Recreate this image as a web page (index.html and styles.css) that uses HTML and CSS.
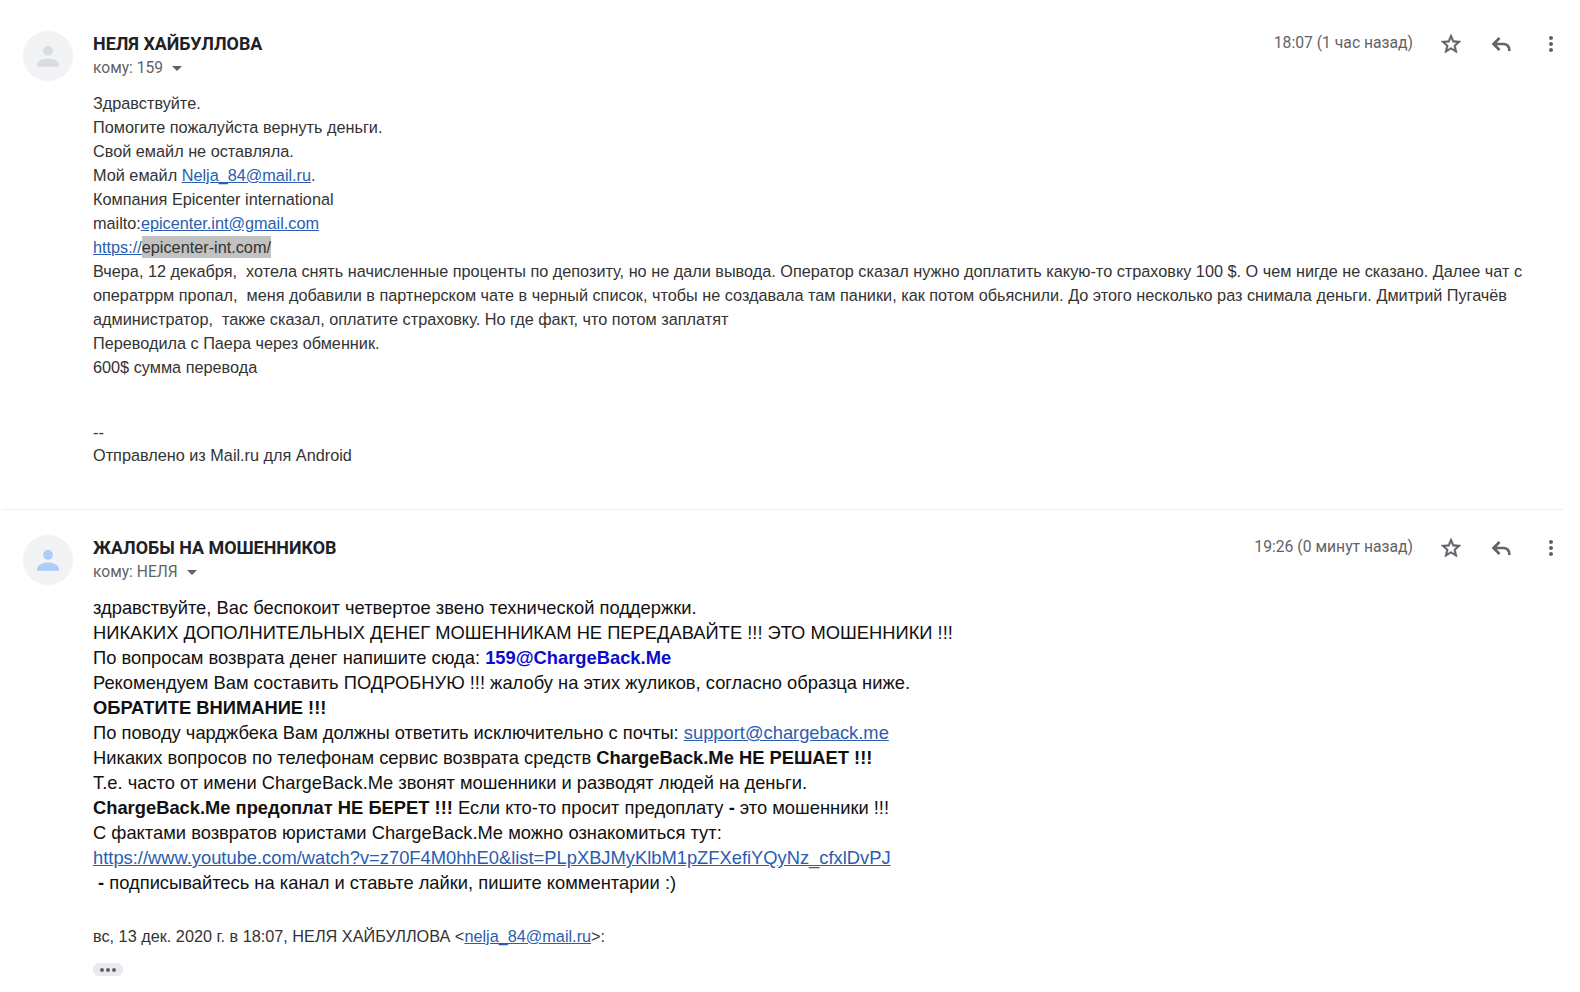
FILE: index.html
```html
<!DOCTYPE html>
<html lang="ru">
<head>
    <meta charset="UTF-8">
    <title>Письмо</title>
    <link rel="stylesheet" href="styles.css">
</head>
<body>
    <!-- первое письмо -->
    <div class="message message-first">
        <div class="avatar">
            <svg viewBox="0 0 24 24" width="28" height="28"><circle cx="12" cy="7.6" r="4.2" fill="#dadce0"/><path d="M2.5 20.5c0-4.4 5.5-6.3 9.500-6.300s9.500 1.900 9.500 6.300v.8h-19z" fill="#dadce0"/></svg>
        </div>
        <div class="content">
            <div class="head">
                <div class="who">
                    <div class="name">НЕЛЯ ХАЙБУЛЛОВА</div>
                    <div class="to">кому: 159 <span class="caret"></span></div>
                </div>
                <div class="time">18:07 (1 час назад)</div>
                <div class="actions">
                    <svg viewBox="0 0 24 24" width="24" height="24"><path fill="#5f6368" stroke="#5f6368" stroke-width=".5" d="M22 9.240l-7.190-.62L12 2 9.190 8.630 2 9.240l5.460 4.730L5.820 21 12 17.270 18.180 21l-1.630-7.030L22 9.240zM12 15.400l-3.760 2.270 1-4.280-3.320-2.880 4.380-.38L12 6.100l1.710 4.040 4.380.38-3.320 2.880 1 4.280L12 15.400z"/></svg>
                    <svg viewBox="0 0 24 24" width="24" height="24"><path fill="none" stroke="#5f6368" stroke-width="2.600" d="M10.500 6L4.500 12l6 6M4.500 12H14c4 0 6.500 2.500 6.500 7"/></svg>
                    <svg viewBox="0 0 24 24" width="24" height="24"><path fill="#5f6368" d="M12 8c1.100 0 2-.9 2-2s-.9-2-2-2-2 .9-2 2 .9 2 2 2zm0 2c-1.100 0-2 .9-2 2s.9 2 2 2 2-.9 2-2-.9-2-2-2zm0 6c-1.100 0-2 .9-2 2s.9 2 2 2 2-.9 2-2-.9-2-2-2z"/></svg>
                </div>
            </div>
            <div class="body body-first">
                <div>Здравствуйте.</div>
                <div>Помогите пожалуйста вернуть деньги.</div>
                <div>Свой емайл не оставляла.</div>
                <div>Мой емайл <a href="#">Nelja_84@mail.ru</a>.</div>
                <div>Компания Epicenter international</div>
                <div>mailto:<a href="#">epicenter.int@gmail.com</a></div>
                <div><a href="#">https://</a><span class="selected">epicenter-int.com/</span></div>
                <div>Вчера, 12 декабря,&nbsp; хотела снять начисленные проценты по депозиту, но не дали вывода. Оператор сказал нужно доплатить какую-то страховку 100 $. О чем нигде не сказано. Далее чат с оператррм пропал,&nbsp; меня добавили в партнерском чате в черный список, чтобы не создавала там паники, как потом обьяснили. До этого несколько раз снимала деньги. Дмитрий Пугачёв администратор,&nbsp; также сказал, оплатите страховку. Но где факт, что потом заплатят</div>
                <div>Переводила с Паера через обменник.</div>
                <div>600$ сумма перевода</div>
                <div class="sign">--<br>Отправлено из Mail.ru для Android</div>
            </div>
        </div>
    </div>

    <!-- второе письмо -->
    <div class="message message-second">
        <div class="avatar">
            <svg viewBox="0 0 24 24" width="28" height="28"><circle cx="12" cy="7.6" r="4.2" fill="#aecbfa"/><path d="M2.5 20.5c0-4.4 5.500-6.300 9.500-6.300s9.500 1.900 9.500 6.300v.8h-19z" fill="#aecbfa"/></svg>
        </div>
        <div class="content">
            <div class="head">
                <div class="who">
                    <div class="name">ЖАЛОБЫ НА МОШЕННИКОВ</div>
                    <div class="to">кому: НЕЛЯ <span class="caret"></span></div>
                </div>
                <div class="time">19:26 (0 минут назад)</div>
                <div class="actions">
                    <svg viewBox="0 0 24 24" width="24" height="24"><path fill="#5f6368" stroke="#5f6368" stroke-width=".5" d="M22 9.240l-7.190-.62L12 2 9.190 8.630 2 9.240l5.460 4.730L5.820 21 12 17.270 18.180 21l-1.630-7.030L22 9.240zM12 15.400l-3.760 2.270 1-4.280-3.320-2.880 4.380-.38L12 6.100l1.710 4.040 4.380.38-3.320 2.880 1 4.280L12 15.400z"/></svg>
                    <svg viewBox="0 0 24 24" width="24" height="24"><path fill="none" stroke="#5f6368" stroke-width="2.600" d="M10.500 6L4.500 12l6 6M4.500 12H14c4 0 6.500 2.500 6.500 7"/></svg>
                    <svg viewBox="0 0 24 24" width="24" height="24"><path fill="#5f6368" d="M12 8c1.100 0 2-.9 2-2s-.9-2-2-2-2 .9-2 2 .9 2 2 2zm0 2c-1.100 0-2 .9-2 2s.9 2 2 2 2-.9 2-2-.9-2-2-2zm0 6c-1.100 0-2 .9-2 2s.9 2 2 2 2-.9 2-2-.9-2-2-2z"/></svg>
                </div>
            </div>
            <div class="body body-second">
                <div>здравствуйте, Вас беспокоит четвертое звено технической поддержки.</div>
                <div>НИКАКИХ ДОПОЛНИТЕЛЬНЫХ ДЕНЕГ МОШЕННИКАМ НЕ ПЕРЕДАВАЙТЕ !!! ЭТО МОШЕННИКИ !!!</div>
                <div>По вопросам возврата денег напишите сюда: <b class="blue">159@ChargeBack.Me</b></div>
                <div>Рекомендуем Вам составить ПОДРОБНУЮ !!! жалобу на этих жуликов, согласно образца ниже.</div>
                <div><b>ОБРАТИТЕ ВНИМАНИЕ !!!</b></div>
                <div>По поводу чарджбека Вам должны ответить исключительно с почты: <a href="#">support@chargeback.me</a></div>
                <div>Никаких вопросов по телефонам сервис возврата средств <b>ChargeBack.Me НЕ РЕШАЕТ !!!</b></div>
                <div>Т.е. часто от имени ChargeBack.Me звонят мошенники и разводят людей на деньги.</div>
                <div><b>ChargeBack.Me предоплат НЕ БЕРЕТ !!!</b> Если кто-то просит предоплату <b>-</b> это мошенники !!!</div>
                <div>С фактами возвратов юристами ChargeBack.Me можно ознакомиться тут:</div>
                <div><a href="#">https://www.youtube.com/watch?v=z70F4M0hhE0&amp;list=PLpXBJMyKlbM1pZFXefiYQyNz_cfxlDvPJ</a></div>
                <div>&nbsp;<b>-</b> подписывайтесь на канал и ставьте лайки, пишите комментарии :)</div>
            </div>
            <div class="quote">вс, 13 дек. 2020 г. в 18:07, НЕЛЯ ХАЙБУЛЛОВА &lt;<a href="#">nelja_84@mail.ru</a>&gt;:</div>
            <div class="dots"><i></i><i></i><i></i></div>
        </div>
    </div>
</body>
</html>
```

FILE: styles.css
```css
body {
    margin: 0;
    background-color: #fff;
    font-family: "Liberation Sans", Arial, sans-serif;
    color: #222;
}

a {
    color: #2a5db0;
    text-decoration: underline;
}

.message {
    display: flex;
    margin-right: 17px;
}

.message-first {
    height: 478px;
    margin-left: 2px;
    padding: 31px 0 0 21px;
    border-bottom: 1px solid #eceff1;
}

.message-second {
    padding: 25px 0 0 23px;
}

.avatar {
    flex: none;
    width: 50px;
    height: 50px;
    border-radius: 50%;
    background-color: #f1f3f4;
    display: flex;
    align-items: center;
    justify-content: center;
}

.content {
    flex: 1;
    margin: -1px 0 0 20px;
    min-width: 0;
}

.head {
    display: flex;
    height: 50px;
    font-family: Roboto, sans-serif;
}

.who {
    flex: 1;
}

.name {
    font-size: 17.900px;
    font-weight: 700;
    color: #202124;
    line-height: 27px;
}

.to {
    font-size: 15.600px;
    color: #5f6368;
    line-height: 22px;
}

.caret {
    display: inline-block;
    width: 0;
    height: 0;
    margin-left: 5px;
    vertical-align: 2px;
    border-left: 5px solid transparent;
    border-right: 5px solid transparent;
    border-top: 5px solid #5f6368;
}

.time {
    font-size: 15.700px;
    color: #5f6368;
    line-height: 26px;
}

.actions {
    display: flex;
    margin: 1px 0 0 26px;
    gap: 26px;
    height: 26px;
    align-items: center;
}

.body-first {
    margin-top: 11px;
    font-size: 16.250px;
    line-height: 24px;
    color: #333;
}

.selected {
    padding: 2px 0;
    background-color: #c2c2c2;
}

.sign {
    margin-top: 42px;
    line-height: 23px;
}

.body-second {
    margin-top: 11px;
    font-size: 18.340px;
    line-height: 25px;
    color: #111;
}

.blue {
    color: #0b0bd0;
}

.quote {
    margin-top: 29px;
    font-size: 16.250px;
    line-height: 24px;
    color: #333;
}

.dots {
    display: flex;
    gap: 2px;
    align-items: center;
    justify-content: center;
    width: 30px;
    height: 13px;
    margin-top: 15px;
    border-radius: 6px;
    background-color: #e8eaed;
}

.dots i {
    width: 4px;
    height: 4px;
    border-radius: 50%;
    background-color: #5f6368;
}
```
